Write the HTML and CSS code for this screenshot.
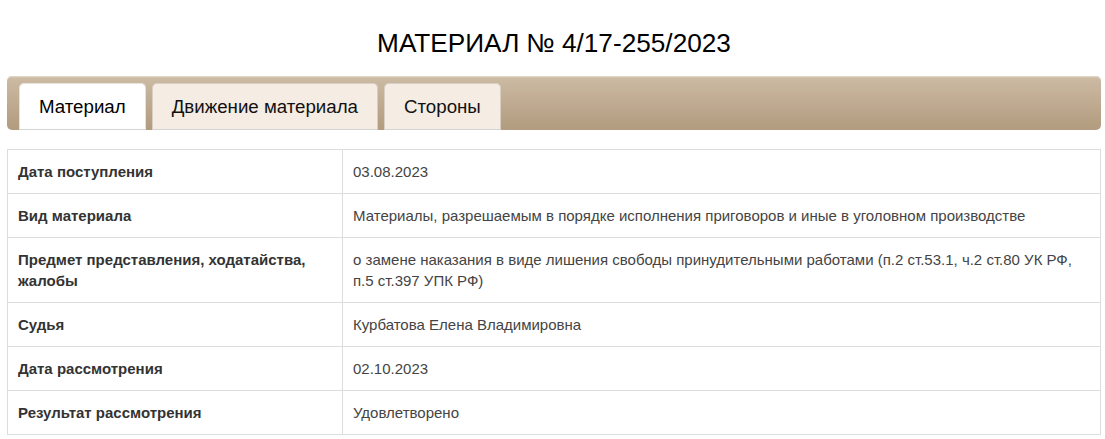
FILE: index.html
```html
<!DOCTYPE html>
<html lang="ru">
<head>
<meta charset="utf-8">
<title>Материал</title>
<link rel="stylesheet" href="styles.css">
</head>
<body>
<div class="page">
  <h1 class="title">МАТЕРИАЛ № 4/17-255/2023</h1>
  <div class="tabs">
    <ul class="tab-nav">
      <li class="tab active">Материал</li>
      <li class="tab">Движение материала</li>
      <li class="tab">Стороны</li>
    </ul>
  </div>
  <table class="info">
    <tr><th>Дата поступления</th><td>03.08.2023</td></tr>
    <tr><th>Вид материала</th><td>Материалы, разрешаемым в порядке исполнения приговоров и иные в уголовном производстве</td></tr>
    <tr><th>Предмет представления, ходатайства, жалобы</th><td>о замене наказания в виде лишения свободы принудительными работами (п.2 ст.53.1, ч.2 ст.80 УК РФ, п.5 ст.397 УПК РФ)</td></tr>
    <tr><th>Судья</th><td>Курбатова Елена Владимировна</td></tr>
    <tr><th>Дата рассмотрения</th><td>02.10.2023</td></tr>
    <tr><th>Результат рассмотрения</th><td>Удовлетворено</td></tr>
  </table>
  <div class="meta">Размещено: 03.08.2023 12:36, изменено: 02.10.2023 12:42</div>
</div>
</body>
</html>
```

FILE: styles.css
```css
html, body {
  margin: 0;
  padding: 0;
  background: #fff;
}
.page {
  padding: 0 4px 0 7px;
  font-family: "Liberation Sans", Arial, sans-serif;
  color: #333;
}
.title {
  margin: 28px 0 18px;
  font-size: 26.2px;
  font-weight: normal;
  line-height: 30px;
  text-align: center;
  color: #000;
}
.tabs {
  height: 54px;
  border-radius: 5px;
  background: linear-gradient(to bottom, #d9cbb9 0, #cbb9a2 3px, #b29b7e 100%);
  box-shadow: inset 0 1px 0 #e0d4c5;
}
.tab-nav {
  list-style: none;
  margin: 0;
  padding: 7px 0 0 12px;
  display: flex;
  gap: 6px;
  height: 47px;
  box-sizing: border-box;
}
.tab {
  box-sizing: border-box;
  height: 47px;
  padding: 0 19px;
  border: 1px solid #d8cfc4;
  border-bottom-color: #d4d4d4;
  border-radius: 5px 5px 0 0;
  background: #f5ece3;
  font-size: 18.7px;
  line-height: 45px;
  color: #111;
  white-space: nowrap;
}
.tab.active {
  background: #fff;
  border-color: #e6e2dc;
  border-bottom-color: #d4d4d4;
  color: #000;
}
.info {
  margin-top: 19px;
  width: 100%;
  border-collapse: collapse;
  border: 1px solid #ddd;
  font-size: 15px;
  line-height: 21px;
}
.info th, .info td {
  border: 1px solid #ddd;
  padding: 11px 10px;
  text-align: left;
  vertical-align: top;
}
.info th {
  width: 314px;
  font-weight: bold;
  color: #333;
}
.info td {
  color: #444;
}
.meta {
  margin-top: 1px;
  text-align: right;
  font-size: 13px;
  line-height: 15px;
  color: #888;
  padding-right: 1px;
}
```
